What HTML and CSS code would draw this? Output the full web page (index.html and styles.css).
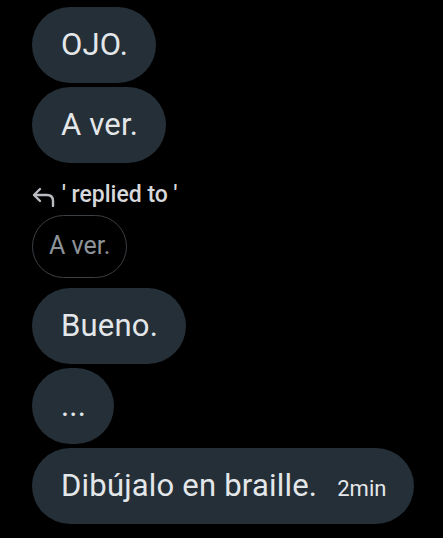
FILE: index.html
```html
<!DOCTYPE html>
<html lang="en">
<head>
    <meta charset="UTF-8">
    <meta name="viewport" content="width=device-width, initial-scale=1.0">
    <title>Chat</title>
    <link rel="stylesheet" href="styles.css">
</head>
<body>
    <div class="thread">
        <div class="bubble">OJO.</div>
        <div class="bubble">A ver.</div>

        <!-- reply header -->
        <div class="reply-label">
            <svg class="reply-icon" width="24" height="20" viewBox="0 0 24 20">
                <path d="M8 2 L2 8 L8 14" fill="none" stroke="#b9bcc0" stroke-width="2.4" stroke-linecap="round" stroke-linejoin="round"/>
                <path d="M2.5 8 H15 Q21 8 21 14 V19" fill="none" stroke="#b9bcc0" stroke-width="2.4" stroke-linecap="round"/>
            </svg>
            <span>' replied to '</span>
        </div>
        <div class="quoted">A ver.</div>

        <div class="bubble">Bueno.</div>
        <div class="bubble">...</div>
        <div class="bubble">Dibújalo en braille.<span class="time">2min</span></div>
    </div>
</body>
</html>
```

FILE: styles.css
```css
* {
    margin: 0;
    padding: 0;
    box-sizing: border-box;
    font-family: Roboto, "Liberation Sans", sans-serif;
}
body {
    background: #000;
    color: #e4e7ea;
}
.thread {
    display: flex;
    flex-direction: column;
    align-items: flex-start;
    padding: 7px 0 0 32px;
}
.bubble {
    height: 76px;
    line-height: 76px;
    padding: 0 28px 0 29px;
    margin-bottom: 4px;
    background: #252f37;
    border-radius: 38px;
    font-size: 31px;
    letter-spacing: 0.2px;
    white-space: nowrap;
}
.time {
    font-size: 22px;
    letter-spacing: 0;
    margin-left: 20px;
}
.reply-label {
    display: flex;
    align-items: center;
    gap: 6px;
    margin-top: 13px;
    height: 28px;
    font-size: 23px;
    font-weight: 500;
    color: #d6d8db;
}
.reply-icon {
    margin-top: 5px;
}
.quoted {
    margin: 7px 0 10px;
    height: 63px;
    line-height: 60px;
    padding: 0 16px;
    border: 1.5px solid #3b4045;
    border-radius: 32px;
    font-size: 25px;
    color: #8d9399;
}
```
